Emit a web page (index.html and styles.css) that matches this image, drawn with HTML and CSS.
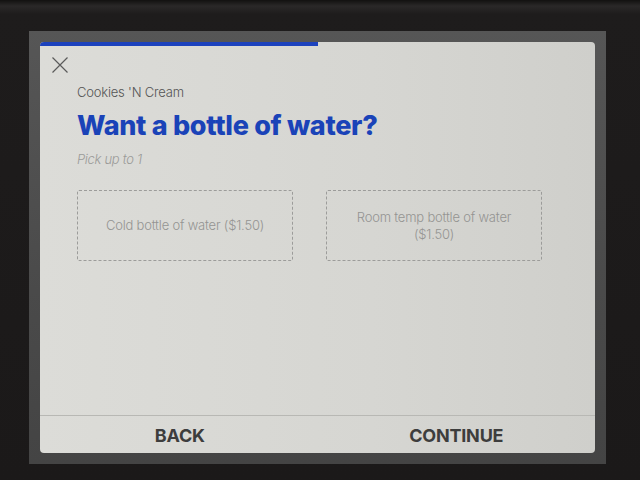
FILE: index.html
```html
<!DOCTYPE html>
<html>
<head>
<meta charset="utf-8">
<link rel="stylesheet" href="styles.css">
</head>
<body>
<div class="frame">
  <div class="modal">
    <div class="progress"><div class="progress-fill" style="width:50%"></div></div>
    <button class="close" aria-label="Close">
      <svg width="16" height="16" viewBox="0 0 16 16"><path d="M0.5 0.5 L15.5 15.5 M15.5 0.5 L0.5 15.5" stroke="#5a5a5a" stroke-width="1.2" fill="none"/></svg>
    </button>
    <div class="content">
      <div class="item-name">Cookies 'N Cream</div>
      <h1 class="title">Want a bottle of water?</h1>
      <div class="hint">Pick up to 1</div>
      <div class="options">
        <div class="option">Cold bottle of water ($1.50)</div>
        <div class="option">Room temp bottle of water ($1.50)</div>
      </div>
    </div>
    <div class="footer">
      <button class="foot-btn">BACK</button>
      <button class="foot-btn">CONTINUE</button>
    </div>
  </div>
</div>
</body>
</html>
```
FILE: styles.css
```css
html, body {
  margin: 0;
  padding: 0;
}
body {
  width: 640px;
  height: 480px;
  background: linear-gradient(to bottom, #121110 0px, #2a2828 6px, #1e1c1c 14px, #1b1919 100%);
  overflow: hidden;
  font-family: Inter, "Liberation Sans", Arial, sans-serif;
}
.frame {
  margin: 31px 0 0 29px;
  width: 577px;
  height: 433px;
  box-sizing: border-box;
  padding: 11px;
  background: linear-gradient(to bottom, #565656, #4a4a4a 60%, #444 100%);
}
.modal {
  width: 555px;
  height: 411px;
  border-radius: 4px;
  overflow: hidden;
  background: linear-gradient(to right, #dcdcd8 0%, #d6d6d2 60%, #cfcfcb 100%);
  display: flex;
  flex-direction: column;
}
.progress {
  height: 4px;
  flex: none;
}
.progress-fill {
  height: 100%;
  background: #1c42bd;
}
.close {
  margin: 11px 0 0 12px;
  padding: 0;
  width: 16px;
  height: 16px;
  border: 0;
  background: none;
  display: block;
  flex: none;
}
.close svg { display: block; }
.content {
  padding-left: 37px;
  flex: 1;
}
.item-name {
  margin-top: 11px;
  font-size: 13px;
  line-height: 16px;
  font-weight: 300;
  color: #555;
  letter-spacing: -0.2px;
}
.title {
  margin: 10px 0 0;
  font-size: 27px;
  line-height: 32px;
  font-weight: 800;
  color: #1a43b8;
  letter-spacing: -0.3px;
}
.hint {
  margin-top: 9px;
  font-size: 13px;
  line-height: 16px;
  font-weight: 300;
  font-style: italic;
  color: #9a9a98;
  letter-spacing: -0.3px;
}
.options {
  margin-top: 23px;
  display: grid;
  grid-template-columns: 216px 216px;
  gap: 33px;
}
.option {
  height: 71px;
  box-sizing: border-box;
  border: 1px dashed #9c9c9a;
  border-radius: 2px;
  display: flex;
  align-items: center;
  justify-content: center;
  text-align: center;
  padding: 0 24px;
  font-size: 13px;
  line-height: 17px;
  font-weight: 300;
  color: #949492;
  letter-spacing: -0.2px;
}
.footer {
  flex: none;
  height: 38px;
  box-sizing: border-box;
  padding-top: 2px;
  border-top: 1px solid #b8b8b4;
  display: grid;
  grid-template-columns: 1fr 1fr;
}
.foot-btn {
  border: 0;
  background: none;
  padding: 0;
  font-family: Inter, "Liberation Sans", Arial, sans-serif;
  font-weight: 700;
  font-size: 18px;
  color: #3d3d3d;
  letter-spacing: -0.2px;
}
.foot-btn:first-child { padding-left: 2px; }
```
